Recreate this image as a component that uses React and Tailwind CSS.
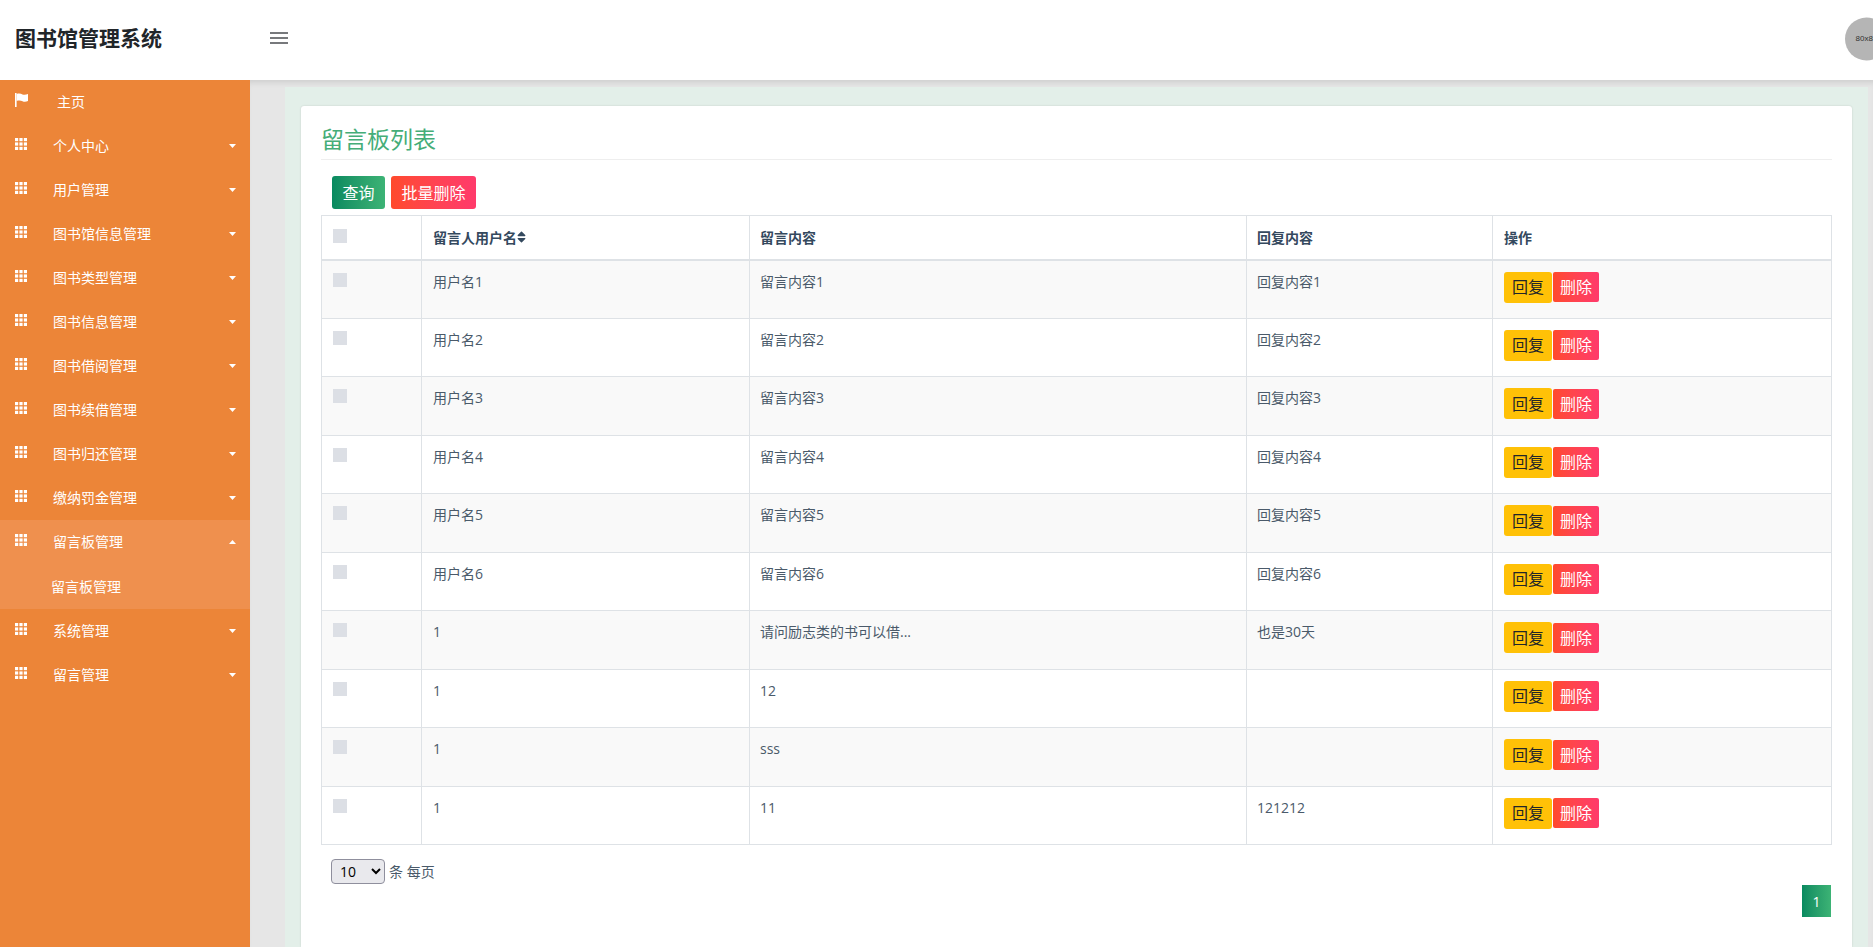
import React from 'react';
import { FaSort } from 'react-icons/fa';

const menus = ['个人中心', '用户管理', '图书馆信息管理', '图书类型管理', '图书信息管理', '图书借阅管理', '图书续借管理', '图书归还管理', '缴纳罚金管理'];

const rows = [
    ['用户名1', '留言内容1', '回复内容1'],
    ['用户名2', '留言内容2', '回复内容2'],
    ['用户名3', '留言内容3', '回复内容3'],
    ['用户名4', '留言内容4', '回复内容4'],
    ['用户名5', '留言内容5', '回复内容5'],
    ['用户名6', '留言内容6', '回复内容6'],
    ['1', '请问励志类的书可以借...', '也是30天'],
    ['1', '12', ''],
    ['1', 'sss', ''],
    ['1', '11', '121212'],
];

const Caret = ({ up }) => (
    <svg className="absolute left-[229px] top-[20px] w-[7px] h-[4px]" viewBox="0 0 7 4" fill="#ffffff">
        <path d={up ? 'M0 4 L3.5 0 L7 4 Z' : 'M0 0 L7 0 L3.5 4 Z'} />
    </svg>
);

const GridIcon = () => (
    <svg className="w-[12px] h-[12px] -mt-[4px] shrink-0" viewBox="0 0 12 12" fill="#ffffff">
        {[0, 4.4, 8.8].map((y) =>
            [0, 4.4, 8.8].map((x) => <rect key={`${x}-${y}`} x={x} y={y} width="3.2" height="3.2" />)
        )}
    </svg>
);

const FlagIcon = () => (
    <svg className="w-[13px] h-[14px] -mt-[4px] shrink-0" viewBox="0 0 13 14" fill="#ffffff">
        <rect x="0" y="0" width="1.6" height="14" />
        <path d="M1.6 1 C4 0 6 0.6 7.5 1.4 C9 2 11 1.8 13 1 L13 8 C11 9 9 9 7.5 8.2 C6 7.6 4 7.2 1.6 8 Z" />
    </svg>
);

const MenuItem = ({ label, up }) => (
    <div className="relative flex h-[44px] items-center pl-[15px] text-[14px] text-white">
        <GridIcon />
        <span className="ml-[26px] -mt-[2px]">{label}</span>
        <Caret up={up} />
    </div>
);

const Check = () => <div className="w-[14px] h-[14px] bg-[#dcdfe5]" />;

const App = () => {
    return (
        <div className="flex h-screen flex-col overflow-hidden bg-white font-['Open_Sans','Noto_Sans_CJK_SC',sans-serif] text-[14px] text-[#4a5a6a]">
            {/* Header */}
            <header className="relative z-10 flex h-[80px] shrink-0 items-center bg-white">
                <div className="w-[250px] shrink-0 pl-[15px] -mt-[2px] text-[21px] font-bold text-[#212529]">图书馆管理系统</div>
                <svg className="ml-[20px] -mt-[4px] w-[18px] h-[12px]" viewBox="0 0 18 12" fill="#77797c">
                    <rect y="0" width="18" height="2" />
                    <rect y="5" width="18" height="2" />
                    <rect y="10" width="18" height="2" />
                </svg>
                <div className="ml-auto -mr-[15px] flex h-[43px] w-[43px] shrink-0 -translate-y-[1.5px] items-center justify-center rounded-full bg-[#b5b5b5] font-['Liberation_Sans',sans-serif] text-[8px] text-[#333333]">
                    80x80
                </div>
            </header>

            <div className="flex min-h-0 flex-1">
                {/* Sidebar */}
                <aside className="w-[250px] shrink-0 bg-[#ec8538]">
                    <div className="flex h-[44px] items-center pl-[15px] text-[14px] text-white">
                        <FlagIcon />
                        <span className="ml-[29px] -mt-[2px]">主页</span>
                    </div>
                    {menus.map((m) => (
                        <MenuItem key={m} label={m} />
                    ))}
                    <div className="bg-[#ef904e]">
                        <MenuItem label="留言板管理" up />
                        <div className="flex h-[45px] items-center pl-[51px] text-[14px] text-white">留言板管理</div>
                    </div>
                    <MenuItem label="系统管理" />
                    <MenuItem label="留言管理" />
                </aside>

                {/* Main */}
                <main className="flex min-w-0 flex-1 flex-col bg-[#e6e6e6] pl-[35px] pr-[5px] pt-[7px] shadow-[inset_0_6px_6px_-4px_rgba(0,0,0,0.12)]">
                    <div className="flex-1 bg-[#e3efe9] px-[16px] pt-[19px]">
                        <div className="h-full rounded-t-[3px] bg-white px-[20px] pt-[19px] shadow-[0_0_2px_rgba(0,0,0,0.15)]">
                            <h2 className="border-b border-[#eeeeee] pb-[6px] text-[23px] leading-[28px] font-normal text-[#45ad78]">留言板列表</h2>

                            <div className="mt-[16px] flex gap-[6px] pl-[11px]">
                                <button className="h-[33px] w-[53px] rounded-[3px] bg-gradient-to-r from-[#078a60] to-[#3cb375] text-[16px] text-white">查询</button>
                                <button className="h-[33px] w-[85px] rounded-[3px] bg-gradient-to-r from-[#ff4a2b] to-[#ff3a6b] text-[16px] text-white">批量删除</button>
                            </div>

                            <table className="mt-[6px] w-[1510px] table-fixed border-collapse">
                                <colgroup>
                                    <col className="w-[100px]" />
                                    <col className="w-[328px]" />
                                    <col className="w-[497px]" />
                                    <col className="w-[246px]" />
                                    <col className="w-[339px]" />
                                </colgroup>
                                <thead>
                                    <tr className="h-[44px] text-left text-[#34495e]">
                                        <th className="border border-b-2 border-[#dee2e6] px-[11px] pt-[13px] pb-[14px] align-top"><Check /></th>
                                        <th className="border border-b-2 border-[#dee2e6] px-[11px] align-middle font-bold">
                                            <span className="inline-flex items-center">留言人用户名<FaSort className="w-[9px] h-[14px]" /></span>
                                        </th>
                                        <th className="border border-b-2 border-[#dee2e6] px-[10px] align-middle font-bold">留言内容</th>
                                        <th className="border border-b-2 border-[#dee2e6] px-[10px] align-middle font-bold">回复内容</th>
                                        <th className="border border-b-2 border-[#dee2e6] px-[11px] align-middle font-bold">操作</th>
                                    </tr>
                                </thead>
                                <tbody>
                                    {rows.map((r, i) => (
                                        <tr key={i} className={i % 2 === 0 ? 'h-[58.5px] bg-[#f9f9f9]' : 'h-[58.5px] bg-white'}>
                                            <td className="border border-[#dee2e6] px-[11px] pt-[12px] align-top"><Check /></td>
                                            <td className="border border-[#dee2e6] px-[11px] pt-[10px] align-top">{r[0]}</td>
                                            <td className="border border-[#dee2e6] px-[10px] pt-[10px] align-top">{r[1]}</td>
                                            <td className="border border-[#dee2e6] px-[10px] pt-[10px] align-top">{r[2]}</td>
                                            <td className="border border-[#dee2e6] px-[11px] pt-[11px] align-top">
                                                <div className="flex items-center gap-[1px]">
                                                    <button className="h-[31px] w-[48px] rounded-[3px] bg-[#ffc107] text-[16px] text-[#212529]">回复</button>
                                                    <button className="h-[30px] w-[46px] rounded-[2px] bg-gradient-to-r from-[#ff4a2b] to-[#ff3a6b] text-[16px] text-white">删除</button>
                                                </div>
                                            </td>
                                        </tr>
                                    ))}
                                </tbody>
                            </table>

                            <div className="mt-[14px] flex items-center pl-[10px]">
                                <select defaultValue="10" className="h-[25px] w-[54px] rounded-[4px] border border-[#8f8f9d] bg-[#e9e9ed] pl-[4px] text-[14px] text-black">
                                    <option>10</option>
                                    <option>25</option>
                                    <option>50</option>
                                </select>
                                <span className="ml-[4px]">条 每页</span>
                            </div>

                            <div className="mt-[1px] flex justify-end pr-[1px]">
                                <div className="flex h-[32px] w-[29px] items-center justify-center bg-gradient-to-r from-[#078a60] to-[#3cb375] text-white">1</div>
                            </div>
                        </div>
                    </div>
                </main>
            </div>
        </div>
    );
};

export default App;
